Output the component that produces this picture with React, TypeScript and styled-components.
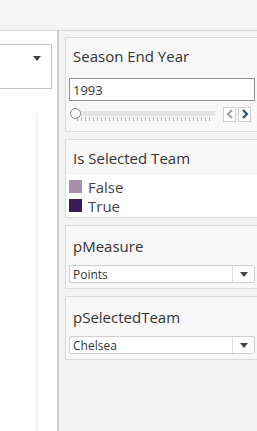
import React from "react";
import styled, { createGlobalStyle } from "styled-components";

const GlobalStyle = createGlobalStyle`
  html, body {
    margin: 0;
    padding: 0;
    overflow: hidden;
    background: #f3f3f3;
    font-family: "Open Sans", "Liberation Sans", sans-serif;
  }
`;

const Page = styled.div`
  width: 257px;
  height: 431px;
  display: flex;
  flex-direction: column;
  overflow: hidden;
`;

const TopBar = styled.div`
  height: 30px;
  flex-shrink: 0;
  background: #f5f5f5;
  border-bottom: 1px solid #d4d4d4;
`;

const Body = styled.div`
  flex: 1;
  display: flex;
`;

const LeftPane = styled.div`
  width: 59px;
  flex-shrink: 0;
  background: #fff;
  border-right: 2px solid #cbcbcb;
  position: relative;
  padding-top: 13px;
  box-sizing: border-box;
`;

const LeftSelect = styled.div`
  width: 52px;
  height: 45px;
  box-sizing: border-box;
  border: 1px solid #c4c4c4;
  border-left: none;
  display: flex;
  justify-content: flex-end;
  padding: 11px 10px 0 0;
`;

const GridLine = styled.div`
  position: absolute;
  left: 36px;
  top: 82px;
  bottom: 0;
  width: 1px;
  background: #ececec;
`;

const SidePane = styled.div`
  flex: 1;
  padding: 6px 0 0 6px;
  display: flex;
  flex-direction: column;
  gap: 7px;
`;

const Card = styled.div<{ $pb?: number }>`
  width: 200px;
  border: 1px solid #d9d9d9;
  border-right: none;
  background: #f7f7f7;
  padding-bottom: ${(p) => p.$pb ?? 5}px;
`;

const Title = styled.div<{ $h: number }>`
  height: ${(p) => p.$h}px;
  display: flex;
  align-items: center;
  padding-left: 7px;
  font-size: 15px;
  color: #333;
`;

const InputBox = styled.div`
  margin: 4px 0 0 3px;
  width: 186px;
  height: 23px;
  box-sizing: border-box;
  background: #fff;
  border: 1px solid #8f8f8f;
  display: flex;
  align-items: center;
  padding-left: 3px;
  font-size: 13px;
  color: #333;
`;

const SliderRow = styled.div`
  display: flex;
  align-items: center;
  margin: 5px 0 0 4px;
  height: 16px;
`;

const Track = styled.div`
  position: relative;
  width: 145px;
  height: 16px;
  margin-right: 8px;
`;

const Rail = styled.div`
  position: absolute;
  left: 4px;
  right: 0;
  top: 5px;
  height: 5px;
  background: #e4e4e4;
`;

const Thumb = styled.div`
  position: absolute;
  left: 0;
  top: 2px;
  width: 9px;
  height: 9px;
  border-radius: 50%;
  border: 1px solid #808080;
  background: #fff;
`;

const Ticks = styled.div`
  position: absolute;
  left: 7px;
  right: 2px;
  top: 11px;
  height: 4px;
  background: repeating-linear-gradient(
    to right,
    #b5b5b5 0 1px,
    transparent 1px 4px
  );
`;

const StepButton = styled.div`
  width: 13px;
  height: 15px;
  margin-right: 2px;
  box-sizing: border-box;
  border: 1px solid #d0d0d0;
  background: #fff;
  display: flex;
  align-items: center;
  justify-content: center;
`;

const Legend = styled.div`
  background: #fff;
  padding: 2px 0 2px 3px;
`;

const LegendRow = styled.div`
  display: flex;
  align-items: center;
  height: 19px;
  gap: 6px;
  font-size: 15px;
  color: #444;
`;

const Swatch = styled.span<{ $c: string }>`
  width: 13px;
  height: 13px;
  background: ${(p) => p.$c};
`;

const Select = styled.div`
  margin-left: 3px;
  width: 186px;
  height: 18px;
  box-sizing: border-box;
  background: #fff;
  border: 1px solid #d0d0d0;
  border-radius: 2px;
  display: flex;
  align-items: center;
  font-size: 12px;
  color: #333;
`;

const SelectText = styled.span`
  flex: 1;
  padding-left: 3px;
`;

const SelectArrow = styled.span`
  width: 21px;
  height: 100%;
  border-left: 1px solid #e0e0e0;
  display: flex;
  align-items: center;
  justify-content: center;
`;

const Caret = () => (
  <svg width="8" height="5" viewBox="0 0 8 5">
    <path d="M0 0h8L4 5z" fill="#444" />
  </svg>
);

const Chevron = ({ dir, color }: { dir: "l" | "r"; color: string }) => (
  <svg width="8" height="10" viewBox="0 0 8 10">
    <path
      d={dir === "l" ? "M6 1L2 5l4 4" : "M2 1l4 4-4 4"}
      fill="none"
      stroke={color}
      strokeWidth="2.2"
    />
  </svg>
);

const Dropdown = ({ value }: { value: string }) => (
  <Select>
    <SelectText>{value}</SelectText>
    <SelectArrow>
      <Caret />
    </SelectArrow>
  </Select>
);

export default function App() {
  return (
    <Page>
      <GlobalStyle />
      <TopBar />
      <Body>
        <LeftPane>
          <LeftSelect>
            <Caret />
          </LeftSelect>
          <GridLine />
        </LeftPane>
        <SidePane>
          <Card $pb={9}>
            <Title $h={36}>Season End Year</Title>
            <InputBox>1993</InputBox>
            <SliderRow>
              <Track>
                <Rail />
                <Ticks />
                <Thumb />
              </Track>
              <StepButton>
                <Chevron dir="l" color="#a0a0a0" />
              </StepButton>
              <StepButton>
                <Chevron dir="r" color="#2b4d7a" />
              </StepButton>
            </SliderRow>
          </Card>
          <Card $pb={0}>
            <Title $h={35}>Is Selected Team</Title>
            <Legend>
              <LegendRow>
                <Swatch $c="#a98fa9" />
                False
              </LegendRow>
              <LegendRow>
                <Swatch $c="#3c1a57" />
                True
              </LegendRow>
            </Legend>
          </Card>
          <Card>
            <Title $h={39}>pMeasure</Title>
            <Dropdown value="Points" />
          </Card>
          <Card>
            <Title $h={39}>pSelectedTeam</Title>
            <Dropdown value="Chelsea" />
          </Card>
        </SidePane>
      </Body>
    </Page>
  );
}
